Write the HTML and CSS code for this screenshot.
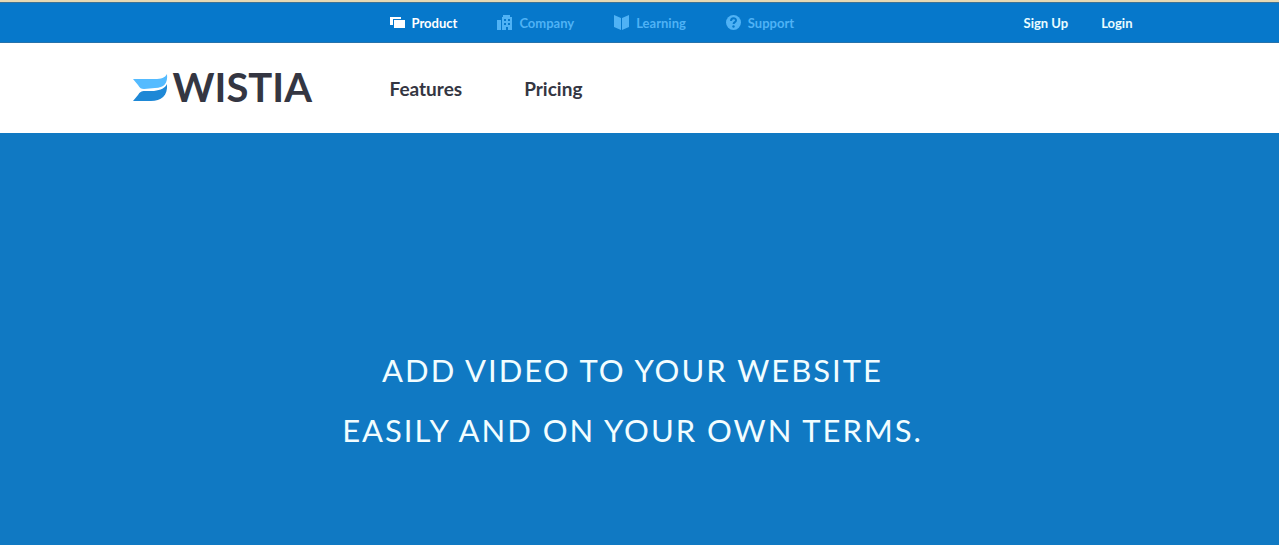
FILE: index.html
```
<!DOCTYPE html>
<html lang="en">
<head>
  <meta charset="UTF-8">
  <title>Wistia</title>
  <meta name="viewport" content="width=device-width, initial-scale=1.0">
  <link rel="stylesheet" href="styles.css">
</head>
<body>

<nav class="topbar">
  <div class="container">
    <div class="sections">
      <a href="#" class="active">
        <svg viewBox="0 0 15 15" aria-hidden="true">
          <path d="M0 2h11v2H3v6H0z"/>
          <path d="M4 5h11v8H4z"/>
        </svg>
        Product
      </a>
      <a href="#">
        <svg viewBox="0 0 15 15" aria-hidden="true">
          <path fill-rule="evenodd" d="M0 5h4v10H0zM5 2h1V0h7v2h2v13h-4v-3H9v3H5zM7 4v2h2V4zm4 0v2h2V4zM7 8v2h2V8zm4 0v2h2V8z"/>
        </svg>
        Company
      </a>
      <a href="#">
        <svg viewBox="0 0 15 15" aria-hidden="true">
          <path d="M0 0l7 3v12l-7-3zM15 0L8 3v12l7-3z"/>
        </svg>
        Learning
      </a>
      <a href="#">
        <svg viewBox="0 0 15 15" aria-hidden="true">
          <circle cx="7.5" cy="7.5" r="7.5"/>
          <path class="mark" d="M5 6c0-3.500 5-3.500 5-.6 0 1.800-2.400 1.700-2.400 3.600"/>
          <circle class="dot" cx="7.500" cy="11.500" r="1.200"/>
        </svg>
        Support
      </a>
    </div>
    <div class="account">
      <a href="#">Sign Up</a>
      <a href="#">Login</a>
    </div>
  </div>
</nav>

<header class="header">
  <div class="container">
    <a href="#" class="logo">
      <svg viewBox="0 0 35 28" aria-hidden="true">
        <path fill="#54bbff" d="M0 5H22C28 5 32 4 34 0C35 9 31 14 22 14L11 15C8 15 7 14 5 11z"/>
        <path fill="#1e88d6" d="M0 27H18C28 27 35 22 34 10C32 14 28 16 21 17H12C8 17 7 18 5 21z"/>
      </svg>
      <span>WISTIA</span>
    </a>
    <nav class="menu">
      <a href="#">Features</a>
      <a href="#">Pricing</a>
    </nav>
  </div>
</header>

<main class="hero">
  <h1>ADD VIDEO TO YOUR WEBSITE<br>EASILY AND ON YOUR OWN TERMS.</h1>
</main>

</body>
</html>
```

FILE: styles.css
```
* {
  box-sizing: border-box;
}

body {
  margin: 0;
  min-height: 100vh;
  display: flex;
  flex-direction: column;
  font-family: Lato, "Open Sans", sans-serif;
  background-color: #fff;
}

a {
  color: inherit;
  text-decoration: none;
}

.topbar, .header, .hero {
  padding-right: 14px;
}

.container {
  max-width: 1000px;
  margin: 0 auto;
  display: flex;
  align-items: center;
}

/* Top bar */
.topbar {
  border-top: 2px solid #e6d9b4;
  background-color: #0678cb;
  box-shadow: inset 0 1px #3d7396, inset 0 -1px #2672ab;
  font-size: 13px;
  line-height: 16px;
  font-weight: bold;
}

.topbar .container {
  padding: 13px 0 12px 257px;
  justify-content: space-between;
}

.sections {
  display: flex;
  gap: 40px;
}

.sections a {
  display: flex;
  align-items: flex-start;
  gap: 7px;
  color: #4fb2f5;
}

.sections a.active {
  color: #fff;
}

.sections svg {
  width: 15px;
  height: 15px;
  fill: currentColor;
}

.sections .mark {
  fill: none;
  stroke: #0678cb;
  stroke-width: 2;
}

.sections .dot {
  fill: #0678cb;
}

.account {
  display: flex;
  gap: 33px;
  color: #eafcff;
}

/* Logo and menu */
.header {
  color: #343642;
}

.header .container {
  height: 90px;
}

.logo {
  width: 257px;
  display: flex;
  align-items: center;
  gap: 5px;
  font-size: 40px;
  line-height: 40px;
  font-weight: bold;
}

.logo svg {
  width: 35px;
  height: 28px;
}

.logo span {
  padding-bottom: 2px;
}

.menu {
  padding-top: 2px;
  display: flex;
  gap: 62px;
  font-size: 19px;
  line-height: 24px;
  font-weight: bold;
}

/* Hero */
.hero {
  flex: 1;
  padding-top: 207px;
  padding-bottom: 80px;
  background-color: #1079c3;
  color: #f2fdff;
  text-align: center;
}

.hero h1 {
  margin: 0;
  font-size: 31px;
  line-height: 60px;
  font-weight: normal;
  letter-spacing: 2px;
}
```
